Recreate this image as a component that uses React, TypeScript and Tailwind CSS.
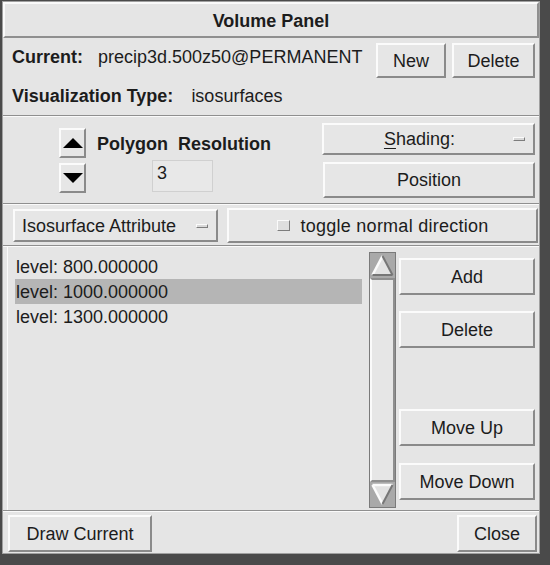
import React from "react";

type BtnProps = { className?: string; children?: React.ReactNode };

function Btn({ className = "", children }: BtnProps) {
  return (
    <div
      className={
        "flex items-center justify-center shrink-0 border-2 border-t-[#fbfbfb] border-l-[#fbfbfb] border-b-[#8a8a8a] border-r-[#8a8a8a] bg-[#e6e6e6] text-[18px] leading-[22px] text-[#1c1c1c] " +
        className
      }
    >
      {children}
    </div>
  );
}

function Sep() {
  return <div className="h-[2px] shrink-0 border-t border-t-[#8f8f8f] border-b border-b-[#fafafa]" />;
}

function Indicator() {
  return (
    <div className="w-[12px] h-[4px] border border-t-[#fbfbfb] border-l-[#fbfbfb] border-b-[#7d7d7d] border-r-[#7d7d7d] bg-[#d8d8d8]" />
  );
}

function ScrollArrow({ up }: { up: boolean }) {
  return (
    <svg width="25" height="25" viewBox="0 0 25 25" className="block shrink-0">
      <rect x="0" y="0" width="25" height="25" fill="#a9a9a9" />
      {up ? (
        <g>
          <polygon points="12.5,3 2.5,22 22.5,22" fill="#e2e2e2" />
          <line x1="12.5" y1="3" x2="2.5" y2="22" stroke="#fbfbfb" strokeWidth="2.5" />
          <line x1="12.5" y1="3" x2="22.5" y2="22" stroke="#767676" strokeWidth="2" />
          <line x1="2.5" y1="22" x2="22.5" y2="22" stroke="#767676" strokeWidth="2" />
        </g>
      ) : (
        <g>
          <polygon points="2.5,3 22.5,3 12.5,22" fill="#e2e2e2" />
          <line x1="2.5" y1="3" x2="22.5" y2="3" stroke="#fbfbfb" strokeWidth="2.5" />
          <line x1="2.5" y1="3" x2="12.5" y2="22" stroke="#fbfbfb" strokeWidth="2.5" />
          <line x1="22.5" y1="3" x2="12.5" y2="22" stroke="#767676" strokeWidth="2" />
        </g>
      )}
    </svg>
  );
}

function ArrowBtn({ up }: { up: boolean }) {
  return (
    <Btn className="w-[27px] h-[30px]">
      <svg width="20" height="10" viewBox="0 0 20 10" className="block">
        {up ? <polygon points="10,0 0,10 20,10" fill="#000" /> : <polygon points="0,0 20,0 10,10" fill="#000" />}
      </svg>
    </Btn>
  );
}

export default function App() {
  const items = ["level: 800.000000", "level: 1000.000000", "level: 1300.000000"];
  return (
    <div className="w-[550px] h-[565px] bg-[#4a4a4a] pl-[2px] pt-[1px] text-[#1c1c1c] font-['Liberation_Sans',Arial,sans-serif]">
      <div className="w-[538px] h-[553px] bg-[#e5e5e5] border border-[#a0a0a0] flex flex-col">
        {/* Title */}
        <div className="h-[36px] shrink-0 border-2 border-t-[#fafafa] border-l-[#fafafa] border-b-[#8f8f8f] border-r-[#8f8f8f] flex items-center justify-center font-bold text-[18px] leading-[22px] pt-[2px]">
          Volume Panel
        </div>

        {/* Current row */}
        <div className="h-[42px] shrink-0 flex items-start pt-[5px] pl-[9px] pr-[4px]">
          <span className="mt-[3px] font-bold text-[18px] leading-[22px]">Current:</span>
          <span className="mt-[3px] ml-[15px] text-[18px] leading-[22px]">precip3d.500z50@PERMANENT</span>
          <Btn className="ml-auto w-[70px] h-[35px]">New</Btn>
          <Btn className="ml-[6px] w-[83px] h-[35px]">Delete</Btn>
        </div>

        {/* Visualization row */}
        <div className="h-[35px] shrink-0 flex items-start pt-[5px] pl-[9px]">
          <span className="font-bold text-[18px] leading-[22px]">Visualization Type:</span>
          <span className="ml-[18px] text-[18px] leading-[22px]">isosurfaces</span>
        </div>
        <Sep />

        {/* Polygon section */}
        <div className="h-[86px] shrink-0 flex pl-[56px] pr-[4px]">
          <div className="flex flex-col pt-[11px] gap-[5px]">
            <ArrowBtn up />
            <ArrowBtn up={false} />
          </div>
          <div className="ml-[11px] flex flex-col pt-[16px]">
            <span className="font-bold text-[18px] leading-[22px] whitespace-pre">Polygon  Resolution</span>
            <div className="ml-[55px] mt-[5px] w-[61px] h-[32px] border border-[#d0d0d0] bg-[#e8e8e8] flex items-start pt-[1px] pl-[4px] text-[18px] leading-[22px]">
              3
            </div>
          </div>
          <div className="ml-auto flex flex-col pt-[6px] w-[213px]">
            <Btn className="h-[32px] justify-start">
              <span className="flex-1 text-center pl-[2px]">
                <span className="underline underline-offset-[3px]">S</span>hading:
              </span>
              <div className="mr-[8px]">
                <Indicator />
              </div>
            </Btn>
            <Btn className="mt-[7px] h-[36px] ml-[1px]">Position</Btn>
          </div>
        </div>
        <Sep />

        {/* Attribute row */}
        <div className="h-[40px] shrink-0 flex items-start pt-[3px] pl-[10px]">
          <Btn className="mt-[1px] w-[205px] h-[33px] justify-start pl-[7px]">
            <span>Isosurface Attribute</span>
            <div className="ml-auto mr-[8px]">
              <Indicator />
            </div>
          </Btn>
          <Btn className="ml-[9px] w-[311px] h-[35px]">
            <div className="w-[13px] h-[11px] border border-t-[#fbfbfb] border-l-[#fbfbfb] border-b-[#7d7d7d] border-r-[#7d7d7d] bg-[#dedede]" />
            <span className="ml-[11px] tracking-[0.25px]">toggle normal direction</span>
          </Btn>
        </div>
        <Sep />

        {/* List section */}
        <div className="h-[263px] shrink-0 flex pl-[4px] pr-[4px]">
          <div className="w-[360px] border-l border-l-[#fafafa] pl-[7px] pt-[7px] flex flex-col">
            {items.map((t, i) => (
              <div
                key={t}
                className={
                  "w-[347px] h-[25px] flex items-center pl-[1px] text-[18px] leading-[22px] " +
                  (i === 1 ? "bg-[#b5b5b5]" : "")
                }
              >
                {t}
              </div>
            ))}
          </div>
          <div className="ml-[2px] mt-[5px] w-[27px] h-[256px] flex flex-col border border-[#7a7a7a] bg-[#d6d6d6]">
            <ScrollArrow up />
            <div className="flex-1 border-2 border-t-[#8f8f8f] border-l-[#fafafa] border-b-[#8f8f8f] border-r-[#8f8f8f] bg-[#e6e6e6]" />
            <ScrollArrow up={false} />
          </div>
          <div className="ml-[3px] flex flex-col w-[136px]">
            <Btn className="mt-[11px] h-[37px]">Add</Btn>
            <Btn className="mt-[16px] h-[37px]">Delete</Btn>
            <Btn className="mt-[61px] h-[37px]">Move Up</Btn>
            <Btn className="mt-[17px] h-[37px]">Move Down</Btn>
          </div>
        </div>
        <Sep />

        {/* Bottom row */}
        <div className="flex-1 flex items-start pt-[3px] pl-[5px] pr-[2px]">
          <Btn className="w-[144px] h-[37px]">Draw Current</Btn>
          <Btn className="ml-auto w-[80px] h-[37px]">Close</Btn>
        </div>
      </div>
    </div>
  );
}
